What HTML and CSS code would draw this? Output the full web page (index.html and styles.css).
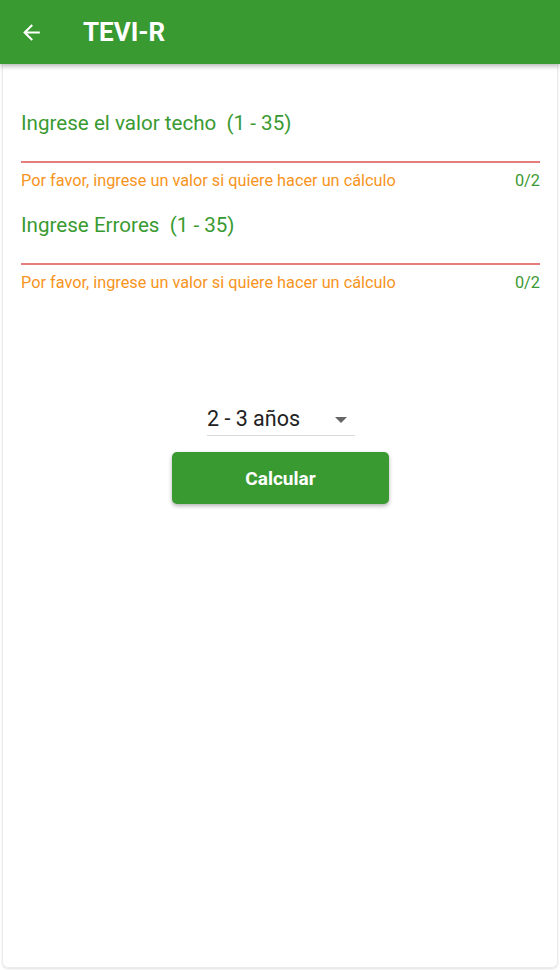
FILE: index.html
```html
<!DOCTYPE html>
<html lang="es">
<head>
<meta charset="utf-8">
<title>TEVI-R</title>
<link rel="stylesheet" href="styles.css">
</head>
<body>
<div class="app">
  <header class="appbar">
    <svg class="back" width="24" height="24" viewBox="0 0 24 24"><path d="M20 11H7.83l5.59-5.59L12 4l-8 8 8 8 1.41-1.41L7.83 13H20v-2z" fill="#fff"/></svg>
    <h1 class="title">TEVI-R</h1>
  </header>
  <main class="card">
    <div class="field">
      <div class="label">Ingrese el valor techo&nbsp; (1 - 35)</div>
      <div class="line"></div>
      <div class="helper"><span class="msg">Por favor, ingrese un valor si quiere hacer un cálculo</span><span class="count">0/2</span></div>
    </div>
    <div class="field">
      <div class="label">Ingrese Errores&nbsp; (1 - 35)</div>
      <div class="line"></div>
      <div class="helper"><span class="msg">Por favor, ingrese un valor si quiere hacer un cálculo</span><span class="count">0/2</span></div>
    </div>
    <div class="controls">
      <div class="select"><span>2 - 3 años</span><svg width="12" height="6" viewBox="0 0 12 6"><path d="M0 0h12L6 6z" fill="#666"/></svg></div>
      <button class="btn">Calcular</button>
    </div>
  </main>
</div>
</body>
</html>
```
FILE: styles.css
```css
* { box-sizing: border-box; }
html, body { margin: 0; padding: 0; background: #fff; }
body { font-family: Roboto, "Noto Sans", sans-serif; width: 560px; height: 970px; overflow: hidden; }
.app { display: flex; flex-direction: column; height: 970px; }
.appbar {
  height: 64px; background: #3a9a32; display: flex; align-items: center;
  padding-left: 19px; box-shadow: 0 2px 5px rgba(0,0,0,0.3); position: relative; z-index: 1;
}
.back { width: 25px; height: 25px; }
.title { margin: 0 0 0 39px; color: #fff; font-size: 26px; font-weight: 700; }
.card {
  flex: 1; margin: 0 2px 2px 2px; border: 1px solid #ececec; border-top: none;
  border-radius: 0 0 6px 6px; box-shadow: 0 1px 2px rgba(0,0,0,0.12);
  padding: 45px 17px 0 18px;
}
.field { display: flex; flex-direction: column; }
.label { color: #3a9a32; font-size: 20.6px; line-height: 28px; height: 28px; }
.line { height: 2px; background: #e57d7b; margin-top: 24px; }
.helper { display: flex; justify-content: space-between; font-size: 16.3px; line-height: 20px; margin-top: 8px; height: 40px; }
.msg { color: #f7941d; }
.count { color: #3a9a32; }
.controls { display: flex; flex-direction: column; align-items: center; margin-top: 89px; }
.select {
  width: 148px; display: flex; justify-content: space-between; align-items: center;
  border-bottom: 1px solid #d8d8d8; height: 34px; padding: 0 2px 0 0; font-size: 21.5px; color: #222;
  margin-left: 1px;
}
.select svg { margin-right: 6px; margin-top: 2px; }
.btn {
  margin-top: 16px; width: 217px; height: 52px; background: #3a9a32; color: #fff; border: none;
  border-radius: 5px; font-family: inherit; font-size: 19px; font-weight: 700;
  box-shadow: 0 2px 4px rgba(0,0,0,0.3);
}
```
